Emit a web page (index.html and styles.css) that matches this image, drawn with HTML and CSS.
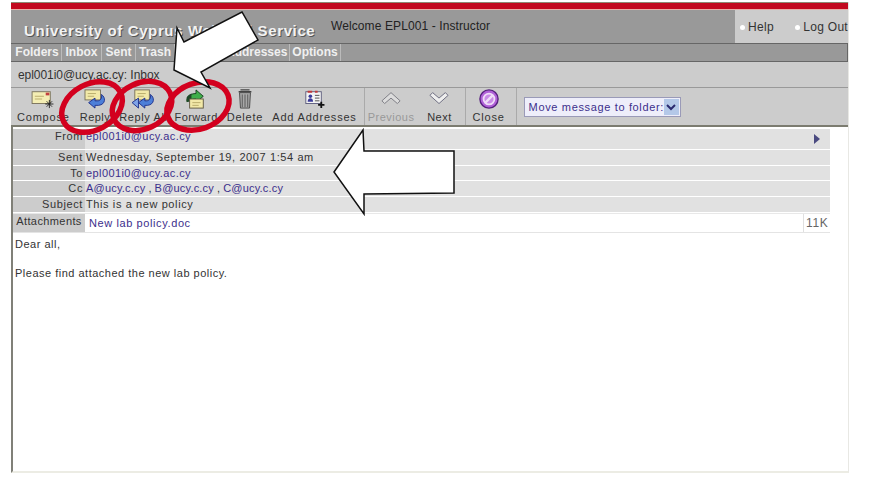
FILE: index.html
```html
<!DOCTYPE html>
<html lang="en">
<head>
  <meta charset="UTF-8" />
  <title>University of Cyprus WebMail Service</title>
  <link rel="stylesheet" href="styles.css">
</head>
<body>

  <div class="page">
    <div class="redbar"></div>

    <div class="header">
      <div class="title">University of Cyprus WebMail Service</div>
      <div class="welcome">Welcome EPL001 - Instructor</div>
      <div class="links">
        <a class="help" href="#">Help</a>
        <a class="logout" href="#">Log Out</a>
      </div>
    </div>

    <div class="nav">
      <a class="nav-folders" href="#">Folders</a>
      <a class="nav-inbox" href="#">Inbox</a>
      <a class="nav-sent" href="#">Sent</a>
      <a class="nav-trash" href="#">Trash</a>
      <span class="nav-hidden"></span>
      <a class="nav-addr" href="#">Addresses</a>
      <a class="nav-options" href="#">Options</a>
    </div>

    <div class="crumb">epl001i0@ucy.ac.cy: Inbox</div>

    <div class="toolbar">
      <a class="tool tool-compose" href="#">
        <svg viewBox="0 0 26 22">
          <rect x="1" y="3" width="20" height="13" fill="#f4eeb4" stroke="#77705a"/>
          <path d="M4 8h10M4 11h8" stroke="#b5a868"/>
          <rect x="16" y="4" width="4" height="3" fill="#c24040"/>
          <path d="M20 12v9M15.500 16.500h9M17 13.500l6 6M23 13.500l-6 6" stroke="#222" stroke-width="1"/>
        </svg>
        <span>Compose</span>
      </a>
      <a class="tool tool-reply" href="#">
        <svg viewBox="0 0 26 22">
          <rect x="2" y="1" width="17" height="11" fill="#f2e9a8" stroke="#77705a"/>
          <path d="M5 5h9M5 8h7" stroke="#b5a868"/>
          <path d="M20 6c5 3 5 11-3 12h-4v3l-7-6 7-5v3h3c3 0 5-3 4-7z" fill="#4d7fd8" stroke="#1a2c88"/>
        </svg>
        <span>Reply</span>
      </a>
      <a class="tool tool-replyall" href="#">
        <svg viewBox="0 0 26 22">
          <rect x="4" y="1" width="16" height="11" fill="#f2e9a8" stroke="#77705a"/>
          <path d="M7 5h9M7 8h7" stroke="#b5a868"/>
          <path d="M21 6c5 3 5 11-3 12h-3v3l-7-6 7-5v3h2c3 0 5-3 4-7z" fill="#4d7fd8" stroke="#1a2c88"/>
          <path d="M8 10l-7 5 7 6z" fill="#7fa4e8" stroke="#1a2c88"/>
        </svg>
        <span>Reply All</span>
      </a>
      <a class="tool tool-forward" href="#">
        <svg viewBox="0 0 26 22">
          <path d="M3 14c-1-6 4-9 10-9V1l8 7-8 7v-4c-4 0-7 1-10 3z" fill="#3fae4a" stroke="#123c18"/>
          <path d="M3 9c1-2 3-3 5-4v9H3z" fill="#1f4a28"/>
          <rect x="6" y="11" width="15" height="10" fill="#f2e9a8" stroke="#5d5640"/>
          <path d="M9 15h9M9 18h7" stroke="#b5a868"/>
        </svg>
        <span>Forward</span>
      </a>
      <a class="tool tool-delete" href="#">
        <svg viewBox="0 0 26 22">
          <path d="M8 1h10M6 3h14" stroke="#444" stroke-width="1.500"/>
          <path d="M7 4h12l-1 17H8z" fill="#a8a8a8" stroke="#444"/>
          <path d="M10 6v14M13 6v14M16 6v14" stroke="#555"/>
        </svg>
        <span>Delete</span>
      </a>
      <a class="tool tool-addr" href="#">
        <svg viewBox="0 0 26 22">
          <rect x="4" y="3" width="17" height="13" fill="#f4f4f4" stroke="#5a5a7a"/>
          <path d="M6 3h5M14 3h3" stroke="#c23a3a" stroke-width="2"/>
          <circle cx="9" cy="8" r="2" fill="#3a3a9a"/>
          <path d="M6 14c0-5 6-5 6 0z" fill="#3a3a9a"/>
          <path d="M14 7h5M14 10h5M14 13h5" stroke="#444"/>
          <path d="M21 14v7M17.500 17.500h7" stroke="#111" stroke-width="2"/>
        </svg>
        <span>Add Addresses</span>
      </a>

      <div class="tool-sep sep-first"></div>

      <a class="tool tool-prev" href="#">
        <svg viewBox="0 0 26 22">
          <path d="M3 13l10-9 10 9-3 3-7-6-7 6z" fill="#dcdcdc" stroke="#77777f"/>
        </svg>
        <span>Previous</span>
      </a>
      <a class="tool tool-next" href="#">
        <svg viewBox="0 0 26 22">
          <path d="M3 7l10 9 10-9-3-3-7 6-7-6z" fill="#eeeeee" stroke="#66667a"/>
        </svg>
        <span>Next</span>
      </a>

      <div class="tool-sep sep-second"></div>

      <a class="tool tool-close" href="#">
        <svg viewBox="0 0 26 22">
          <circle cx="13" cy="11" r="10" fill="#b060d8" stroke="#56207e" stroke-width="1.500"/>
          <circle cx="13" cy="11" r="6" fill="#c88ae6" stroke="#efdcf8" stroke-width="2"/>
          <path d="M9 15l8-8" stroke="#efdcf8" stroke-width="2.500"/>
        </svg>
        <span>Close</span>
      </a>

      <div class="tool-sep sep-third"></div>

      <div class="move">
        <span class="move-label">Move message to folder:</span>
        <span class="move-btn">
          <svg viewBox="0 0 10 8" width="10" height="8"><path d="M1 2l4 4 4-4" fill="none" stroke="#2a2a70" stroke-width="2"/></svg>
        </span>
      </div>
    </div>

    <div class="msg-head">
      <div class="row row-from">
        <div class="label">From</div>
        <div class="value"><a href="#">epl001i0@ucy.ac.cy</a><span class="more"></span></div>
      </div>
      <div class="row">
        <div class="label">Sent</div>
        <div class="value">Wednesday, September 19, 2007 1:54 am</div>
      </div>
      <div class="row row-to">
        <div class="label">To</div>
        <div class="value"><a href="#">epl001i0@ucy.ac.cy</a></div>
      </div>
      <div class="row row-cc">
        <div class="label">Cc</div>
        <div class="value"><a href="#">A@ucy.c.cy</a> , <a href="#">B@ucy.c.cy</a> , <a href="#">C@ucy.c.cy</a></div>
      </div>
      <div class="row">
        <div class="label">Subject</div>
        <div class="value">This is a new policy</div>
      </div>
      <div class="row row-attach">
        <div class="label">Attachments</div>
        <div class="value"><a href="#">New lab policy.doc</a></div>
        <div class="size">11K</div>
      </div>
    </div>

    <div class="msg-body">
      <p>Dear all,</p>
      <p>Please find attached the new lab policy.</p>
    </div>
  </div>

  <!-- Annotations drawn over the screenshot -->
  <svg class="marks" viewBox="0 0 873 487" width="873" height="487">
    <g fill="none" stroke="#d3001e" stroke-width="5.500">
      <ellipse cx="92" cy="107" rx="32" ry="23" transform="rotate(-28 92 107)"/>
      <ellipse cx="142" cy="106" rx="31" ry="23" transform="rotate(-25 142 106)"/>
      <ellipse cx="198" cy="106" rx="32" ry="23" transform="rotate(-20 198 106)"/>
    </g>
    <polygon points="174,70 177,28 184,42 242,12 258,40 201,72 210,88" fill="#fff" stroke="#111" stroke-width="1.500"/>
    <polygon points="334,172 363,130 364,151 454,151 454,193 364,194 364,214" fill="#fff" stroke="#111" stroke-width="1.500"/>
  </svg>

</body>
</html>
```

FILE: styles.css
```css
body {
  margin: 0;
  background-color: #fff;
  font-family: "Liberation Sans", Arial, sans-serif;
  font-size: 11px;
  color: #333;
  height: 487px;
  overflow: hidden;
}

a {
  color: inherit;
  text-decoration: none;
}

.page {
  box-sizing: border-box;
  width: 838px;
  height: 471px;
  margin: 2px 0 0 11px;
  border-left: 2px solid #808078;
  border-right: 1px solid #e8e8e4;
  border-bottom: 2px solid #ecece4;
}

.redbar {
  height: 6px;
  margin-left: -2px;
  background-color: #c20a1e;
  border-top: 1px solid #8d8a72;
  border-bottom: 1px solid #e8b0a8;
}

.header {
  display: flex;
  height: 33px;
  margin-left: -2px;
  background-color: #999;
}

.title {
  padding: 12px 0 0 13px;
  width: 320px;
  box-sizing: border-box;
  font-size: 15px;
  font-weight: bold;
  letter-spacing: 0.620px;
  color: #f2f2f2;
  text-shadow: 1px 1px 0 #555;
  white-space: nowrap;
}

.welcome {
  padding-top: 9px;
  font-size: 12px;
  letter-spacing: 0.100px;
  color: #222;
  flex: 1;
}

.links {
  display: flex;
  width: 113px;
  background-color: #ccc;
  padding-top: 10px;
  box-sizing: border-box;
  font-size: 12px;
  letter-spacing: 0.300px;
}

.links a {
  position: relative;
  white-space: nowrap;
}

.links a::before {
  content: "";
  position: absolute;
  left: -8px;
  top: 5px;
  width: 5px;
  height: 5px;
  border-radius: 50%;
  background-color: #fff;
}

.help {
  margin-left: 13px;
  width: 57px;
}

.nav {
  display: flex;
  height: 17px;
  margin-left: -2px;
  background-color: #999;
  border-top: 1px solid #666;
  border-bottom: 1px solid #666;
  border-right: 1px solid #666;
}

.nav a,
.nav-hidden {
  box-sizing: border-box;
  border-right: 1px solid #bbb;
  font-size: 12px;
  font-weight: bold;
  line-height: 17px;
  color: #f0f0f0;
  white-space: nowrap;
  text-align: center;
}

.nav-folders { width: 51px; padding-left: 2px; }
.nav-inbox { width: 40px; }
.nav-sent { width: 34px; }
.nav-trash { width: 39px; }
.nav-hidden { width: 51px; border-right: 0; }
.nav-addr { width: 64px; text-align: right; padding-right: 6px; }
.nav-options { width: 51px; }

.crumb {
  height: 25px;
  margin-left: -2px;
  padding: 6px 0 0 7px;
  box-sizing: border-box;
  background-color: #ccc;
  font-size: 12px;
  letter-spacing: -0.050px;
}

.toolbar {
  display: flex;
  height: 40px;
  margin-left: -2px;
  padding-left: 6px;
  box-sizing: border-box;
  background-color: #ccc;
  border-top: 1px solid #999;
  border-bottom: 2px solid #7c7c70;
}

.tool {
  display: flex;
  flex-direction: column;
  align-items: center;
  margin-right: 9px;
  padding-top: 1px;
  font-size: 11px;
  letter-spacing: 0.800px;
  white-space: nowrap;
}

.tool svg {
  display: block;
  flex: none;
  width: 26px;
  height: 20px;
}

.tool span {
  margin-top: 2px;
}

.tool-compose { margin-right: 10px; }
.tool-reply { letter-spacing: 0.500px; }
.tool-replyall { margin-right: 7px; letter-spacing: 0.600px; }
.tool-forward { letter-spacing: 0.400px; }
.tool-addr { margin-right: 7px; }

.tool-prev {
  margin-right: 12px;
  color: #999;
}

.tool-prev,
.tool-next {
  letter-spacing: 0.500px;
}

.tool-sep {
  width: 1px;
  background-color: #aaa;
}

.sep-first { margin: 0 3px 0 0; }
.sep-second { margin: 0 6px 0 4px; }
.sep-third { margin: 0 7px 0 2px; }

.move {
  display: flex;
  align-items: center;
  width: 157px;
  height: 20px;
  margin-top: 9px;
  box-sizing: border-box;
  background-color: #eeeefa;
  border: 1px solid #9a9ab8;
  color: #3c2f8c;
  font-size: 11px;
  letter-spacing: 0.650px;
  padding-left: 4px;
}

.move-label {
  flex: 1;
  white-space: nowrap;
}

.move-btn {
  display: flex;
  align-items: center;
  justify-content: center;
  width: 17px;
  height: 16px;
  margin-right: 1px;
  background-color: #b4c8e8;
}

.msg-head {
  width: 817px;
  margin-top: 2px;
}

.row {
  display: flex;
  height: 15px;
  margin-bottom: 1px;
  line-height: 15px;
  letter-spacing: 0.600px;
}

.row-from {
  height: 20px;
  line-height: 15px;
}

.row-to {
  height: 14px;
}

.row-attach {
  box-sizing: border-box;
  height: 20px;
  border-top: 1px solid #e8e8e8;
  border-bottom: 1px solid #e4e4e4;
  margin-bottom: 0;
}

.label {
  box-sizing: border-box;
  width: 72px;
  padding-right: 2px;
  background-color: #ccc;
  text-align: right;
  white-space: nowrap;
  overflow: hidden;
}

.value {
  position: relative;
  flex: 1;
  padding-left: 1px;
  background-color: #e1e1e1;
  white-space: nowrap;
}

.value a {
  color: #3c2f8c;
  letter-spacing: 0.400px;
}

.row-cc .value {
  letter-spacing: 0;
}

.row-cc .value a {
  letter-spacing: 0.200px;
}

.row-attach .label {
  line-height: 14px;
  padding: 0;
  text-align: center;
  letter-spacing: 0.400px;
}

.row-attach .value {
  background-color: #fff;
  padding: 2px 0 0 4px;
}

.row-attach .value a {
  letter-spacing: 0.600px;
}

.size {
  width: 27px;
  box-sizing: border-box;
  border-left: 1px solid #e0e0e0;
  padding: 2px 0 0 2px;
  color: #666;
  font-size: 12px;
}

.more {
  position: absolute;
  right: 10px;
  top: 5px;
  border-left: 6px solid #4a4a80;
  border-top: 5px solid transparent;
  border-bottom: 5px solid transparent;
}

.msg-body {
  padding: 5px 0 0 2px;
  letter-spacing: 0.500px;
}

.msg-body p {
  margin: 0 0 16px;
  line-height: 13px;
}

.marks {
  position: absolute;
  left: 0;
  top: 0;
  pointer-events: none;
}
```
